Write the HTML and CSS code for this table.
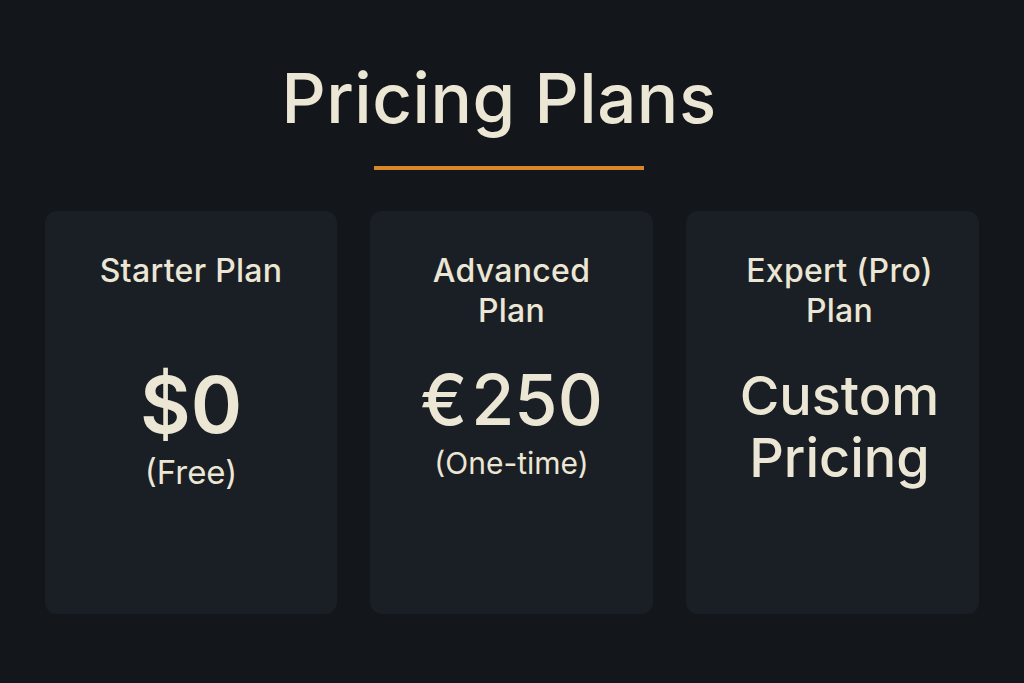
FILE: index.html
```html
<!DOCTYPE html>
<html lang="en">
<head>
<meta charset="utf-8">
<title>Pricing Plans</title>
<link rel="stylesheet" href="styles.css">
</head>
<body>
<main class="page">
  <header class="header">
    <h1 class="title">Pricing Plans</h1>
    <div class="rule"></div>
  </header>
  <section class="cards">
    <article class="card card-starter">
      <h2 class="plan">Starter Plan</h2>
      <div class="price">$0</div>
      <div class="note note-free">(Free)</div>
    </article>
    <article class="card card-advanced">
      <h2 class="plan">Advanced<br>Plan</h2>
      <div class="price price-eur">€<span class="amount">250</span></div>
      <div class="note note-once">(One-time)</div>
    </article>
    <article class="card card-expert">
      <h2 class="plan">Expert (Pro)<br>Plan</h2>
      <div class="price price-custom">Custom<br>Pricing</div>
    </article>
  </section>
</main>
</body>
</html>
```

FILE: styles.css
```css
* { box-sizing: border-box; }
html, body {
  margin: 0;
  padding: 0;
  background: #13171c;
}
body {
  width: 1024px;
  height: 683px;
  overflow: hidden;
  font-family: Inter, "Noto Sans", "Liberation Sans", sans-serif;
  color: #ece6d5;
}
.page {
  display: flex;
  flex-direction: column;
  align-items: center;
  padding-top: 56px;
}
.header {
  display: flex;
  flex-direction: column;
  align-items: center;
}
.title {
  margin: 0 26px 0 0;
  font-size: 69px;
  font-weight: 500;
  line-height: 84px;
  letter-spacing: 0.5px;
}
.rule {
  width: 270px;
  height: 4px;
  background: #d9862a;
  margin: 26px 7px 0 0;
}
.cards {
  display: flex;
  gap: 33px;
  margin-top: 41px;
}
.card {
  width: 289px;
  height: 403px;
  background: #1a1f25;
  border-radius: 12px;
  display: flex;
  flex-direction: column;
  align-items: center;
  text-align: center;
  padding-top: 40px;
}
.card-starter { width: 292px; }
.card-advanced { width: 283px; }
.card-expert { width: 293px; padding-left: 14px; }
.plan {
  margin: 0;
  font-size: 32px;
  font-weight: 500;
  line-height: 40px;
  min-height: 80px;
  letter-spacing: 0.3px;
}
.price {
  margin-top: 34px;
  font-size: 78px;
  font-weight: 600;
  line-height: 80px;
}
.price-eur {
  margin-top: 30px;
  font-size: 70px;
  font-weight: 500;
  line-height: 78px;
}
.amount {
  margin-left: 4px;
}
.price-custom {
  margin-top: 34px;
  font-size: 54px;
  font-weight: 500;
  line-height: 62px;
}
.note {
  font-size: 30px;
  line-height: 34px;
  font-weight: 400;
}
.note-free {
  font-size: 33px;
  margin-top: 10px;
}
.note-once {
  margin-top: 7px;
}
```
